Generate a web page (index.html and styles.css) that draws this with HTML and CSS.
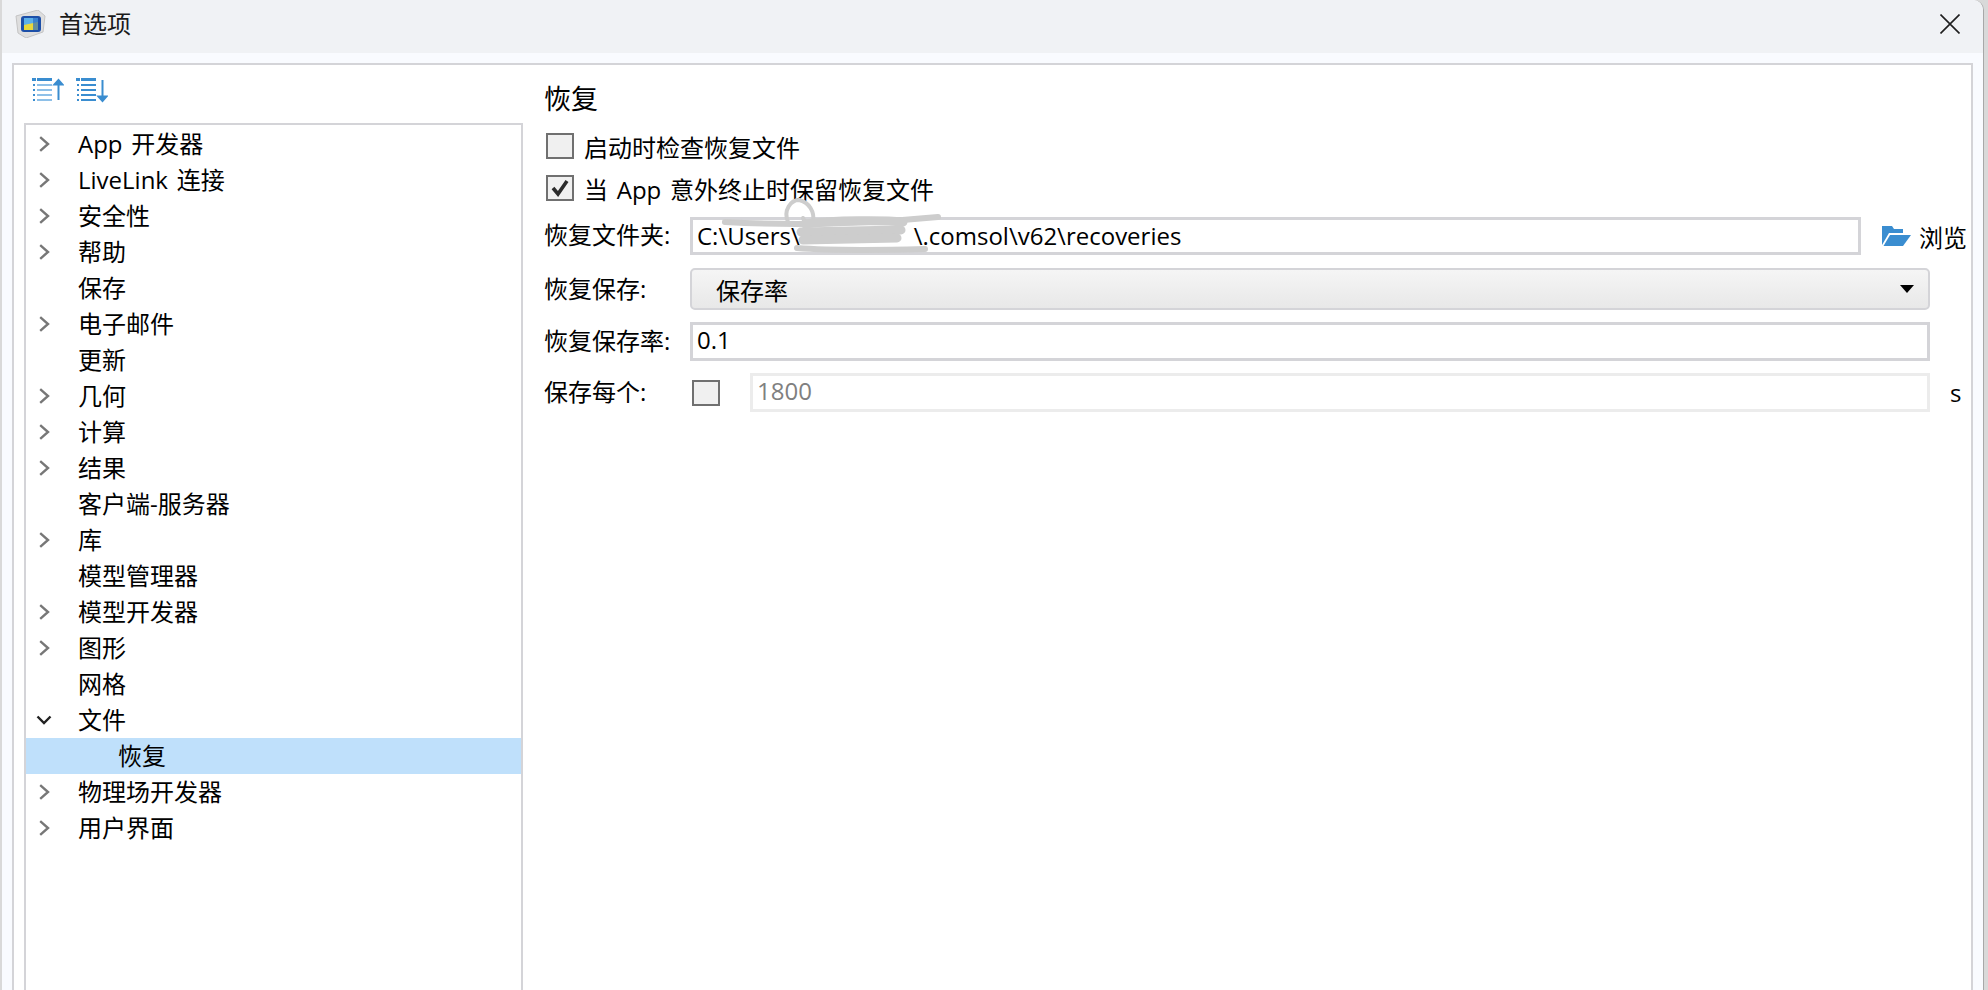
FILE: index.html
```html
<!DOCTYPE html>
<html lang="zh-CN">
<head>
<meta charset="utf-8">
<title>首选项</title>
<link rel="stylesheet" href="styles.css">
</head>
<body>
<div class="window">
  <header class="titlebar">
    <svg class="app-icon" viewBox="0 0 32 28" width="32" height="28">
      <path d="M2 6 L24 0 L31 6 L29 22 L12 28 L4 23 Z" fill="#dedede" stroke="#c4c4c4"/>
      <rect x="7" y="6" width="20" height="16" rx="3" fill="#1c4fa8"/>
      <rect x="10" y="8" width="14" height="12" fill="#e8d83c"/>
      <path d="M10 8h14v4l-14 3z" fill="#5cb0e8"/>
      <path d="M19 8h5v12h-5z" fill="#2b6fc4" opacity=".7"/>
    </svg>
    <span class="title">首选项</span>
    <svg class="close" viewBox="0 0 20 20" width="20" height="20"><path d="M0.5 0.5 L19.5 19.5 M19.5 0.5 L0.5 19.5" stroke="#1f1f1f" stroke-width="1.6" fill="none"/></svg>
  </header>
  <div class="content">
    <div class="panel">
      <aside class="left">
        <div class="toolbar">
          <svg viewBox="0 0 32 25" width="32" height="25">
            <g class="tb-dots"><rect x="0" y="0" width="4" height="3"/><rect x="1" y="6" width="2" height="2"/><rect x="1" y="11" width="2" height="2"/><rect x="1" y="16" width="2" height="2"/><rect x="1" y="21" width="2" height="2"/></g>
            <g class="tb-lines-light"><rect x="5" y="0" width="15" height="3" class="tb-solid"/><rect x="5" y="6" width="15" height="2"/><rect x="5" y="11" width="15" height="2"/><rect x="5" y="16" width="15" height="2"/><rect x="5" y="21" width="15" height="2"/></g>
            <path d="M26.5 22 V3 M22.5 6.5 L26.5 2 L30.5 6.5 Z" class="tb-arrow"/>
          </svg>
          <svg viewBox="0 0 32 25" width="32" height="25">
            <g class="tb-dots"><rect x="0" y="0" width="4" height="3"/><rect x="1" y="6" width="2" height="2"/><rect x="1" y="11" width="2" height="2"/><rect x="1" y="16" width="2" height="2"/><rect x="1" y="21" width="2" height="2"/></g>
            <g class="tb-lines"><rect x="5" y="0" width="15" height="3"/><rect x="5" y="6" width="15" height="2"/><rect x="5" y="11" width="15" height="2"/><rect x="5" y="16" width="15" height="2"/><rect x="5" y="21" width="15" height="2"/></g>
            <path d="M26.5 2 V21 M22.5 18.5 L26.5 23 L30.5 18.5 Z" class="tb-arrow"/>
          </svg>
        </div>
        <ul class="tree">
          <li class="row"><svg class="chev" viewBox="0 0 11 16"><path d="M1.2 1.2 L9 8 L1.2 14.8"/></svg><span>App 开发器</span></li>
          <li class="row"><svg class="chev" viewBox="0 0 11 16"><path d="M1.2 1.2 L9 8 L1.2 14.8"/></svg><span>LiveLink 连接</span></li>
          <li class="row"><svg class="chev" viewBox="0 0 11 16"><path d="M1.2 1.2 L9 8 L1.2 14.8"/></svg><span>安全性</span></li>
          <li class="row"><svg class="chev" viewBox="0 0 11 16"><path d="M1.2 1.2 L9 8 L1.2 14.8"/></svg><span>帮助</span></li>
          <li class="row leaf"><span>保存</span></li>
          <li class="row"><svg class="chev" viewBox="0 0 11 16"><path d="M1.2 1.2 L9 8 L1.2 14.8"/></svg><span>电子邮件</span></li>
          <li class="row leaf"><span>更新</span></li>
          <li class="row"><svg class="chev" viewBox="0 0 11 16"><path d="M1.2 1.2 L9 8 L1.2 14.8"/></svg><span>几何</span></li>
          <li class="row"><svg class="chev" viewBox="0 0 11 16"><path d="M1.2 1.2 L9 8 L1.2 14.8"/></svg><span>计算</span></li>
          <li class="row"><svg class="chev" viewBox="0 0 11 16"><path d="M1.2 1.2 L9 8 L1.2 14.8"/></svg><span>结果</span></li>
          <li class="row leaf"><span>客户端-服务器</span></li>
          <li class="row"><svg class="chev" viewBox="0 0 11 16"><path d="M1.2 1.2 L9 8 L1.2 14.8"/></svg><span>库</span></li>
          <li class="row leaf"><span>模型管理器</span></li>
          <li class="row"><svg class="chev" viewBox="0 0 11 16"><path d="M1.2 1.2 L9 8 L1.2 14.8"/></svg><span>模型开发器</span></li>
          <li class="row"><svg class="chev" viewBox="0 0 11 16"><path d="M1.2 1.2 L9 8 L1.2 14.8"/></svg><span>图形</span></li>
          <li class="row leaf"><span>网格</span></li>
          <li class="row"><svg class="chev-open" viewBox="0 0 16 10"><path d="M1.5 1.5 L8 8 L14.5 1.5"/></svg><span>文件</span></li>
          <li class="row sub selected"><span>恢复</span></li>
          <li class="row"><svg class="chev" viewBox="0 0 11 16"><path d="M1.2 1.2 L9 8 L1.2 14.8"/></svg><span>物理场开发器</span></li>
          <li class="row"><svg class="chev" viewBox="0 0 11 16"><path d="M1.2 1.2 L9 8 L1.2 14.8"/></svg><span>用户界面</span></li>
        </ul>
      </aside>
      <main class="right">
        <h1 class="heading">恢复</h1>
        <div class="check-row"><span class="box"></span><span>启动时检查恢复文件</span></div>
        <div class="check-row second"><span class="box"><svg viewBox="0 0 24 22" width="24" height="22"><path d="M5 11 L10 17 L19 4" fill="none" stroke="#2b2b2b" stroke-width="3.6"/></svg></span><span>当 App 意外终止时保留恢复文件</span></div>
        <div class="form">
          <label class="lab row-path">恢复文件夹:</label>
          <div class="path-line">
            <div class="input path">C:\Users\<span class="redacted"></span>\.comsol\v62\recoveries
              <svg class="scribble" viewBox="0 0 240 60" width="240" height="60">
                <path d="M0 22 C70 26 140 24 213 17" class="line"/>
                <path d="M63 22 C58 10 66 0 74 0 C84 2 90 12 88 22 C84 25 80 24 78 18" class="loop"/>
                <path d="M72 48 C110 51 160 50 200 49" class="line"/>
                <path d="M80 24 C110 20 160 20 178 22" class="thick"/>
                <path d="M76 32 L176 30" class="thick"/>
                <path d="M78 40 L172 38" class="thick"/>
              </svg>
            </div>
            <div class="browse">
              <svg viewBox="0 0 29 20" width="29" height="20"><path d="M0 0 H10 L12 3 H21 V7 H7 L0 19 Z" fill="#3a8dd0"/><path d="M8 9 H29 L21 20 H1.5 Z" fill="#3a8dd0"/></svg>
              <span>浏览</span>
            </div>
          </div>
          <label class="lab">恢复保存:</label>
          <div class="select"><span>保存率</span><i class="caret"></i></div>
          <label class="lab">恢复保存率:</label>
          <div class="input">0.1</div>
          <label class="lab">保存每个:</label>
          <div class="every">
            <span class="box"></span>
            <div class="input disabled">1800</div>
            <span class="unit">s</span>
          </div>
        </div>
      </main>
    </div>
  </div>
</div>
</body>
</html>
```
FILE: styles.css
```css
* { box-sizing: border-box; }
html, body { margin: 0; height: 100%; overflow: hidden; }
body {
  background: #d9d9d9;
  font-family: "Open Sans", "Noto Sans CJK SC", sans-serif;
  font-size: 24px;
  word-spacing: 2.5px;
  color: #000;
  padding: 0 4px 0 2px;
}
.window {
  height: 990px;
  background: #f9fbff;
  border-radius: 0 10px 0 0;
  border-right: 1px solid #a8a8a8;
  display: flex;
  flex-direction: column;
}
.titlebar {
  height: 53px;
  background: #f0f2f5;
  border-radius: 0 10px 0 0;
  display: flex;
  align-items: center;
  padding: 0 23px 5px 12px;
  flex: none;
}
.app-icon { flex: none; }
.title { margin-left: 13px; font-size: 24px; line-height: 30px; color: #1a1a1a; }
.close { margin-left: auto; }
.content { flex: 1; padding: 10px 10px 0 10px; min-height: 0; }
.panel {
  height: 100%;
  background: #fff;
  border: 2px solid #d4d4d8;
  border-bottom: none;
  display: flex;
  padding-left: 10px;
}
.left { width: 499px; flex: none; display: flex; flex-direction: column; }
.toolbar { height: 58px; display: flex; gap: 12px; padding: 13px 0 0 8px; flex: none; }
.tb-dots rect, .tb-lines rect, .tb-solid { fill: #3a8dd0; }
.tb-lines-light rect { fill: #8ec0e8; }
.tb-lines-light rect.tb-solid { fill: #3a8dd0; }
.tb-arrow { fill: #3a8dd0; stroke: #3a8dd0; stroke-width: 2; }
.tree {
  list-style: none;
  margin: 0;
  padding: 1px 0 0 0;
  flex: 1;
  border: 2px solid #d4d4d8;
  border-bottom: none;
}
.row {
  height: 36px;
  display: flex;
  align-items: center;
  padding-left: 13px;
  line-height: 36px;
  white-space: nowrap;
}
.row span { margin-left: 28px; }
.row.leaf { padding-left: 52px; }
.row.leaf span { margin-left: 0; }
.row.sub { padding-left: 92px; }
.row.sub span { margin-left: 0; }
.selected { background: #bfe0fb; }
.chev { width: 11px; height: 16px; flex: none; }
.chev path { fill: none; stroke: #777; stroke-width: 2.4; }
.chev-open { width: 16px; height: 10px; flex: none; margin-left: -3px; margin-right: -2px; }
.chev-open path { fill: none; stroke: #222; stroke-width: 2.4; }
.right { flex: 1; padding: 0 0 0 21px; min-width: 0; position: relative; }
.heading { margin: 0; font-size: 27px; font-weight: 400; height: 67px; line-height: 68px; }
.check-row { height: 28px; display: flex; align-items: center; gap: 10px; margin-left: 2px; }
.check-row.second { margin-top: 14px; }
.box {
  width: 28px;
  height: 26px;
  background: #f0f0f0;
  border: 2px solid #707070;
  display: inline-flex;
  align-items: center;
  justify-content: center;
  flex: none;
}
.form {
  display: grid;
  grid-template-columns: 146px 1240px;
  grid-template-rows: 39px 42px 39px 39px;
  row-gap: 12px;
  align-items: center;
  margin-top: 15px;
}
.lab { line-height: 38px; padding-bottom: 1px; }
.lab.row-path { align-self: start; line-height: 36px; padding-bottom: 0; }
.path-line { display: flex; align-items: center; white-space: nowrap; align-self: start; }
.input {
  height: 39px;
  border: 3px solid #d4d4d8;
  background: #fff;
  line-height: 30px;
  padding-left: 4px;
  position: relative;
  white-space: nowrap;
  font-size: 24px;
}
.input.path { width: 1171px; height: 38px; flex: none; line-height: 31px; }
.redacted { display: inline-block; width: 114px; }
.scribble { position: absolute; left: 32px; top: -20px; overflow: visible; }
.scribble path { fill: none; stroke: #cdcdcd; stroke-linecap: round; }
.scribble path.line { stroke-width: 6; }
.scribble path.loop { stroke-width: 4; }
.scribble path.thick { stroke-width: 9; }
.browse { display: flex; align-items: center; margin-left: 21px; gap: 8px; flex: none; }
.browse svg { flex: none; }
.select {
  height: 42px;
  border: 2px solid #d4d4d8;
  border-radius: 5px;
  background: linear-gradient(#f5f5f5, #e8e8e8);
  display: flex;
  align-items: center;
  justify-content: space-between;
  padding: 0 14px 0 24px;
}
.caret { width: 0; height: 0; border: 7px solid transparent; border-top: 8px solid #000; border-bottom: 0; }
.every { display: flex; align-items: center; position: relative; }
.every .box { margin-left: 2px; }
.every .input { width: 1180px; margin-left: 30px; flex: none; }
.input.disabled { border-color: #ececec; color: #808080; }
.unit { position: absolute; left: 1260px; font-size: 24px; }
```
